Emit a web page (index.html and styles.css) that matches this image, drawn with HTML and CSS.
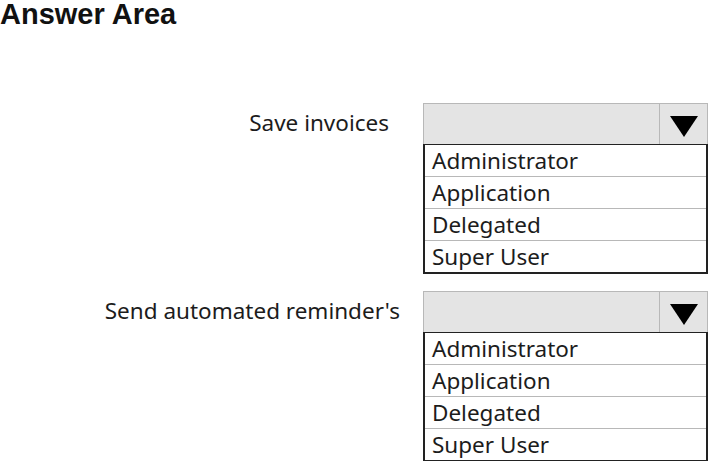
FILE: index.html
```html
<!DOCTYPE html>
<html lang="en">
<head>
    <meta charset="UTF-8">
    <meta name="viewport" content="width=device-width, initial-scale=1.0">
    <title>Answer Area</title>
    <link rel="stylesheet" href="styles.css">
</head>
<body>
    <h1 class="title">Answer Area</h1>

    <div class="questions">
        <div class="question">
            <div class="label label-short">Save invoices</div>
            <div class="picker">
                <div class="select">
                    <div class="select-value"></div>
                    <div class="select-arrow"><span class="triangle"></span></div>
                </div>
                <ul class="options">
                    <li>Administrator</li>
                    <li>Application</li>
                    <li>Delegated</li>
                    <li>Super User</li>
                </ul>
            </div>
        </div>

        <div class="question">
            <div class="label">Send automated reminder's</div>
            <div class="picker">
                <div class="select">
                    <div class="select-value"></div>
                    <div class="select-arrow"><span class="triangle"></span></div>
                </div>
                <ul class="options">
                    <li>Administrator</li>
                    <li>Application</li>
                    <li>Delegated</li>
                    <li>Super User</li>
                </ul>
            </div>
        </div>
    </div>
</body>
</html>
```

FILE: styles.css
```css
body {
    margin: 0;
    background: #ffffff;
    color: #1c1c1c;
    font-family: "Noto Sans", "Open Sans", sans-serif;
}
.title {
    margin: 0;
    font-family: "Liberation Sans", Arial, sans-serif;
    font-size: 29px;
    font-weight: bold;
    line-height: 28px;
    color: #111;
}
.questions {
    display: flex;
    flex-direction: column;
    gap: 17px;
    padding-top: 75px;
}
.question {
    display: grid;
    grid-template-columns: 400px 285px;
    column-gap: 23px;
    align-items: start;
}
.label {
    text-align: right;
    font-size: 22.5px;
    height: 41px;
    line-height: 40px;
}
.label-short {
    padding-right: 11px; /* the first label sits a little further left */
}
.picker {
    display: flex;
    flex-direction: column;
}
.select {
    display: flex;
    height: 41px;
    box-sizing: border-box;
    background: #e4e4e4;
    border: 1px solid #b8b8b8;
    border-bottom: none;
}
.select-value {
    flex-grow: 1;
    border-right: 1px solid #b8b8b8;
}
.select-arrow {
    width: 47px;
    display: flex;
    justify-content: center;
    align-items: center;
    padding-top: 4px;
    box-sizing: border-box;
}
.triangle {
    width: 0;
    height: 0;
    border-left: 14px solid transparent;
    border-right: 14px solid transparent;
    border-top: 21px solid #000;
}
.options {
    list-style: none;
    margin: 0;
    padding: 0;
    border: 2px solid #222;
    border-top-width: 1px;
}
.options li {
    height: 31px;
    line-height: 31px;
    padding-left: 7px;
    font-size: 22.5px;
    border-bottom: 1px solid #b8b8b8;
}
.options li:last-child {
    border-bottom: none;
}
```
